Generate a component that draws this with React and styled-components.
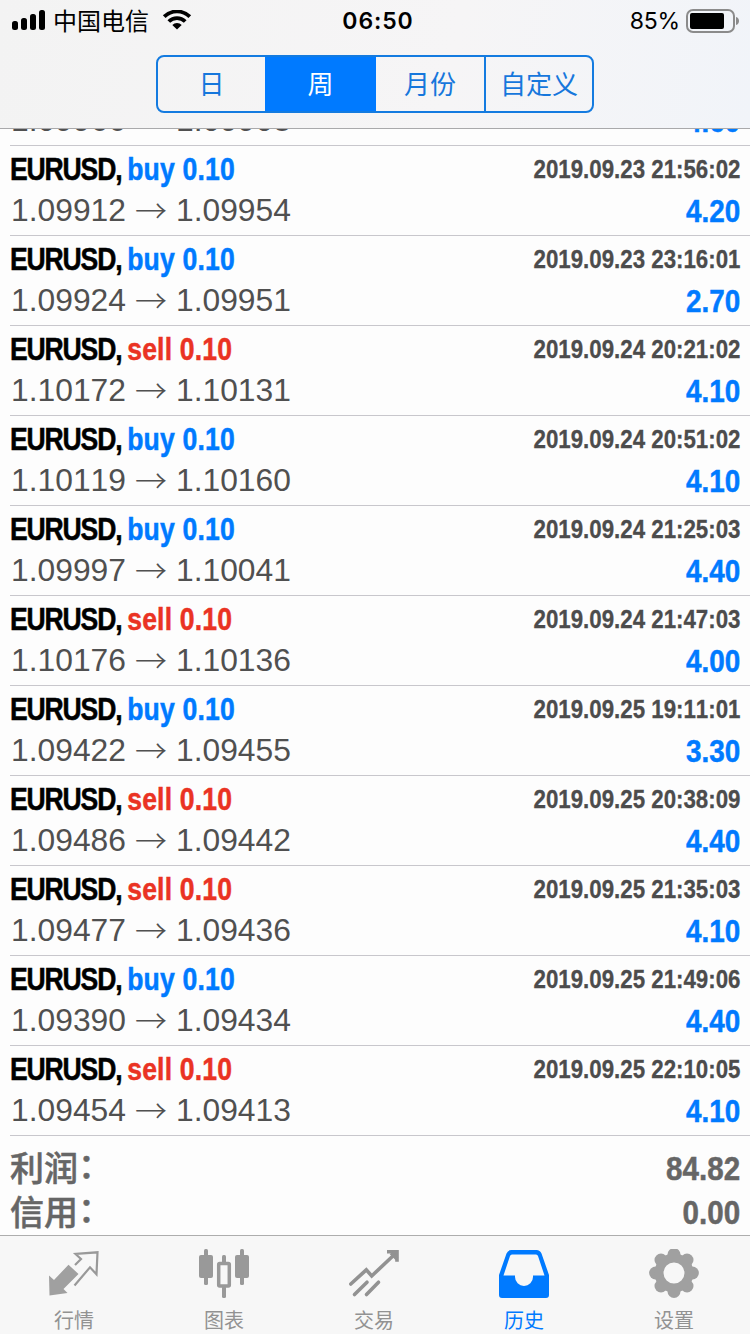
import styled, { createGlobalStyle } from "styled-components";

const color_blue = "#007aff";
const color_red = "#ea3323";
const color_price = "#505050";
const color_muted = "#929292";
const font_cjk = `"Noto Sans CJK SC", sans-serif`;
const font_body = `"Liberation Sans", "Noto Sans CJK SC", sans-serif`;

const GlobalStyle = createGlobalStyle`
  * {
    box-sizing: border-box;
  }

  body {
    margin: 0;
    background: #fdfdfd;
    font-family: ${font_body};
  }
`;

const Screen = styled.div`
  display: flex;
  flex-direction: column;
  width: 750px;
  height: 1334px;
  overflow: hidden;
`;

const Header = styled.header`
  flex: none;
  height: 129px;
  border-bottom: 1px solid #a9a9ab;
  background: linear-gradient(100deg, #f3f3f3 0%, #f6f5f6 60%, #f1f4f9 100%);
`;

const StatusBar = styled.div`
  display: grid;
  grid-template-columns: 1fr auto 1fr;
  align-items: center;
  height: 40px;
  margin-bottom: 15px;
  padding: 0 10px 0 12px;
  color: #000;
`;

const StatusGroup = styled.div`
  display: flex;
  align-items: center;
  justify-content: ${(props) => (props.$end ? "flex-end" : "flex-start")};
`;

const Carrier = styled.span`
  height: 40px;
  margin: 0 13px 0 7px;
  font: 400 24px/37px ${font_cjk};
`;

const Clock = styled.span`
  padding-left: 4px;
  font: 600 23px/40px Inter, sans-serif;
  letter-spacing: 0.9px;
`;

const Percent = styled.span`
  margin-right: 6px;
  font: 400 23px/42px Inter, sans-serif;
  letter-spacing: -0.2px;
`;

const Segments = styled.div`
  display: grid;
  grid-template-columns: 107px 111px 108px 108px;
  width: 438px;
  height: 58px;
  margin: 0 auto;
  border: 2px solid #147be0;
  border-radius: 8px;
  overflow: hidden;
`;

const Segment = styled.button`
  padding: 0 0 2px;
  border: 0;
  border-left: ${(props) => (props.$divided ? "2px solid #147be0" : "0")};
  background: ${(props) => (props.$active ? color_blue : "transparent")};
  color: ${(props) => (props.$active ? "#fff" : "#1677dc")};
  font: 400 26px/52px ${font_cjk};
`;

const List = styled.main`
  display: flex;
  flex: 1;
  flex-direction: column;
  justify-content: flex-end;
  min-height: 0;
  overflow: hidden;
`;

const Deal = styled.article`
  flex: none;
  margin-left: 10px;
  padding: 3px 10px 4px 0;
  border-bottom: 1px solid #c8c7cc;
`;

const Line = styled.div`
  display: flex;
  align-items: center;
  justify-content: space-between;
  height: 41px;
`;

/* condensed bold face, squeezed towards the edge the text is aligned to */
const Condensed = styled.span`
  display: inline-block;
  font: 700 32px/41px "Liberation Sans", sans-serif;
  font-kerning: none;
  transform: scaleX(${(props) => props.$scale});
  transform-origin: ${(props) => props.$origin || "right"} center;
  white-space: nowrap;
  -webkit-text-stroke: 0.5px;
`;

const Symbol = styled.span`
  margin-right: 7px;
  color: #000;
  letter-spacing: -1.4px;
`;

const Side = styled.span`
  color: ${(props) => (props.$sell ? color_red : color_blue)};
  letter-spacing: 0.2px;
`;

const Time = styled(Condensed)`
  color: #4c4c4c;
  font-size: 26px;
  -webkit-text-stroke: 0.3px;
`;

const Price = styled.span`
  display: flex;
  align-items: center;
  padding-left: 1px;
  color: ${color_price};
  font: 400 31.8px/41px "Liberation Sans", sans-serif;
  font-kerning: none;
`;

const Arrow = styled.span`
  width: 50px;
  padding-bottom: 3px;
  text-align: center;
  font: 300 32px/38px ${font_cjk};
`;

const Profit = styled(Condensed)`
  padding-top: 2px;
  color: ${color_blue};
`;

const Totals = styled.section`
  flex: none;
  height: 99px;
  padding: 10px 10px 0;
`;

const Total = styled.div`
  display: flex;
  align-items: center;
  justify-content: space-between;
  height: 44px;
  color: #666;
`;

const TotalLabel = styled.span`
  height: 44px;
  font: 500 34px/41px ${font_cjk};
  -webkit-text-stroke: 0.5px;
`;

const Colon = styled.span`
  line-height: 1;
  vertical-align: 3px;
`;

const TotalValue = styled(Condensed)`
  font-size: 34px;
`;

const TabBar = styled.nav`
  display: grid;
  flex: none;
  grid-template-columns: repeat(5, 150px);
  height: 99px;
  border-top: 1px solid #adadad;
  background: #f7f7f7;
`;

const Tab = styled.a`
  display: flex;
  flex-direction: column;
  align-items: center;
  padding: 13px 2px 0 0;
  color: ${(props) => (props.$active ? color_blue : color_muted)};

  svg {
    flex: none;
    width: 52px;
    height: 52px;
    margin-left: 2px;
  }
`;

const TabLabel = styled.span`
  margin-top: 4px;
  font: 400 20px/30px ${font_cjk};
`;

const deals = [
  { side: "buy", time: "2019.09.23 21:56:02", open: "1.09912", close: "1.09954", profit: "4.20" },
  { side: "buy", time: "2019.09.23 23:16:01", open: "1.09924", close: "1.09951", profit: "2.70" },
  { side: "sell", time: "2019.09.24 20:21:02", open: "1.10172", close: "1.10131", profit: "4.10" },
  { side: "buy", time: "2019.09.24 20:51:02", open: "1.10119", close: "1.10160", profit: "4.10" },
  { side: "buy", time: "2019.09.24 21:25:03", open: "1.09997", close: "1.10041", profit: "4.40" },
  { side: "sell", time: "2019.09.24 21:47:03", open: "1.10176", close: "1.10136", profit: "4.00" },
  { side: "buy", time: "2019.09.25 19:11:01", open: "1.09422", close: "1.09455", profit: "3.30" },
  { side: "sell", time: "2019.09.25 20:38:09", open: "1.09486", close: "1.09442", profit: "4.40" },
  { side: "sell", time: "2019.09.25 21:35:03", open: "1.09477", close: "1.09436", profit: "4.10" },
  { side: "buy", time: "2019.09.25 21:49:06", open: "1.09390", close: "1.09434", profit: "4.40" },
  { side: "sell", time: "2019.09.25 22:10:05", open: "1.09454", close: "1.09413", profit: "4.10" },
];

const SignalIcon = () => (
  <svg width="34" height="22" viewBox="0 1 34 22">
    <rect x="0" y="12" width="6" height="9" rx="2.5" />
    <rect x="9" y="9" width="6" height="12" rx="2.5" />
    <rect x="18" y="5" width="6" height="16" rx="2.5" />
    <rect x="27" y="1" width="6" height="20" rx="2.5" />
  </svg>
);

const WifiIcon = () => (
  <svg width="30" height="22" viewBox="0 1.5 30 22">
    <g fill="none" stroke="#000" strokeWidth="3.8">
      <path d="M2.2 8.2a18.2 18.2 0 0 1 25.6 0" />
      <path d="M6.8 13a11.7 11.7 0 0 1 16.4 0" />
    </g>
    <path d="M10.3 16.4a6.7 6.7 0 0 1 9.4 0L15 21z" />
  </svg>
);

const BatteryIcon = () => (
  <svg width="54" height="24" viewBox="0 0 54 24">
    <rect x="1" y="1" width="47" height="22" rx="6" fill="none" stroke="#8b8b8b" strokeWidth="2" />
    <rect x="4" y="4" width="34" height="16" rx="2" />
    <path d="M50 8c4 1 4 7 0 8z" fill="#8b8b8b" />
  </svg>
);

const QuotesIcon = () => (
  <svg viewBox="0 0 52 52">
    <path d="M0 26.500l5 4.500L19.500 15.700l10 9.300-15 15 4 4L.5 46.500z" fill="#a0a0a0" />
    <path
      d="M26 16l6-6-5.500-5 22-1.700-1 22-6.500-7L25.500 36.500"
      fill="none"
      stroke="#999"
      strokeWidth="2.2"
    />
  </svg>
);

const ChartIcon = () => (
  <svg viewBox="0 0 52 52" fill="#999">
    <rect x="5" y="0" width="4" height="36" rx="1.5" />
    <rect x="0" y="6" width="14" height="23" rx="2" />
    <rect x="41" y="0" width="4" height="36" rx="1.5" />
    <rect x="36" y="6" width="14" height="23" rx="2" />
    <rect x="23" y="6" width="4" height="9" rx="1.5" />
    <rect x="23" y="37" width="4" height="12" rx="1.5" />
    <rect x="19.7" y="14.500" width="10.600" height="22.500" rx="1" fill="none" stroke="#999" strokeWidth="3.500" />
  </svg>
);

const TradeIcon = () => (
  <svg viewBox="0 0 52 52" fill="none" stroke="#929292" strokeWidth="3.600" strokeLinecap="round">
    <path d="M1.800 35L17.300 20.800l5.400 6.200L46 5" />
    <path d="M5.500 45.500L18 33.200M17.500 45.500L29.500 33.200" />
    <path d="M38 2.800h10v10" strokeLinecap="butt" />
    <path d="M42 4l6 6z" fill="#929292" />
  </svg>
);

const HistoryIcon = () => (
  <svg viewBox="0 0 52 52">
    <path
      fillRule="evenodd"
      fill={color_blue}
      d="M12.500 1h25q3.500 0 5 3.500L50 26v20q0 3-3 3H3q-3 0-3-3V26L7.500 4.500Q9 1 12.500 1zm.5 4.500q-1.500 0-2 1.500L4.500 26.500H16V28a9 9 0 0 0 18 0v-1.500h11.500L39 7q-.5-1.500-2-1.500z"
    />
  </svg>
);

const gearTeeth = [0, 45, 90, 135, 180, 225, 270, 315];

const SettingsIcon = () => (
  <svg viewBox="0 0 52 52" fill="#a0a0a0">
    {gearTeeth.map((angle) => (
      <circle key={angle} cx="25" cy="5.600" r="6.500" transform={`rotate(${angle} 25 24)`} />
    ))}
    <circle cx="25" cy="24" r="15" fill="none" stroke="#a0a0a0" strokeWidth="9" />
  </svg>
);

const tabs = [
  { label: "行情", icon: <QuotesIcon /> },
  { label: "图表", icon: <ChartIcon /> },
  { label: "交易", icon: <TradeIcon /> },
  { label: "历史", icon: <HistoryIcon />, active: true },
  { label: "设置", icon: <SettingsIcon /> },
];

const PriceLine = ({ open, close, profit }) => (
  <Line>
    <Price>
      {open}
      <Arrow>→</Arrow>
      {close}
    </Price>
    <Profit $scale={0.87}>{profit}</Profit>
  </Line>
);

const DealRow = ({ side, time, ...prices }) => (
  <Deal>
    <Line>
      <Condensed $scale={0.83} $origin="left">
        <Symbol>EURUSD,</Symbol>
        <Side $sell={side === "sell"}>{side} 0.10</Side>
      </Condensed>
      <Time $scale={0.857}>{time}</Time>
    </Line>
    <PriceLine {...prices} />
  </Deal>
);

const TotalRow = ({ label, value }) => (
  <Total>
    <TotalLabel>
      {label}
      <Colon>：</Colon>
    </TotalLabel>
    <TotalValue $scale={0.87}>{value}</TotalValue>
  </Total>
);

const App = () => {
  return (
    <Screen>
      <GlobalStyle />
      <Header>
        <StatusBar>
          <StatusGroup>
            <SignalIcon />
            <Carrier>中国电信</Carrier>
            <WifiIcon />
          </StatusGroup>
          <Clock>06:50</Clock>
          <StatusGroup $end>
            <Percent>85%</Percent>
            <BatteryIcon />
          </StatusGroup>
        </StatusBar>
        <Segments>
          <Segment>日</Segment>
          <Segment $active>周</Segment>
          <Segment>月份</Segment>
          <Segment $divided>自定义</Segment>
        </Segments>
      </Header>
      <List>
        <Deal>
          <PriceLine open="1.09966" close="1.09908" profit="4.60" />
        </Deal>
        {deals.map((deal) => (
          <DealRow key={deal.time} {...deal} />
        ))}
        <Totals>
          <TotalRow label="利润" value="84.82" />
          <TotalRow label="信用" value="0.00" />
        </Totals>
      </List>
      <TabBar>
        {tabs.map((tab) => (
          <Tab key={tab.label} $active={tab.active}>
            {tab.icon}
            <TabLabel>{tab.label}</TabLabel>
          </Tab>
        ))}
      </TabBar>
    </Screen>
  );
};

export default App;
